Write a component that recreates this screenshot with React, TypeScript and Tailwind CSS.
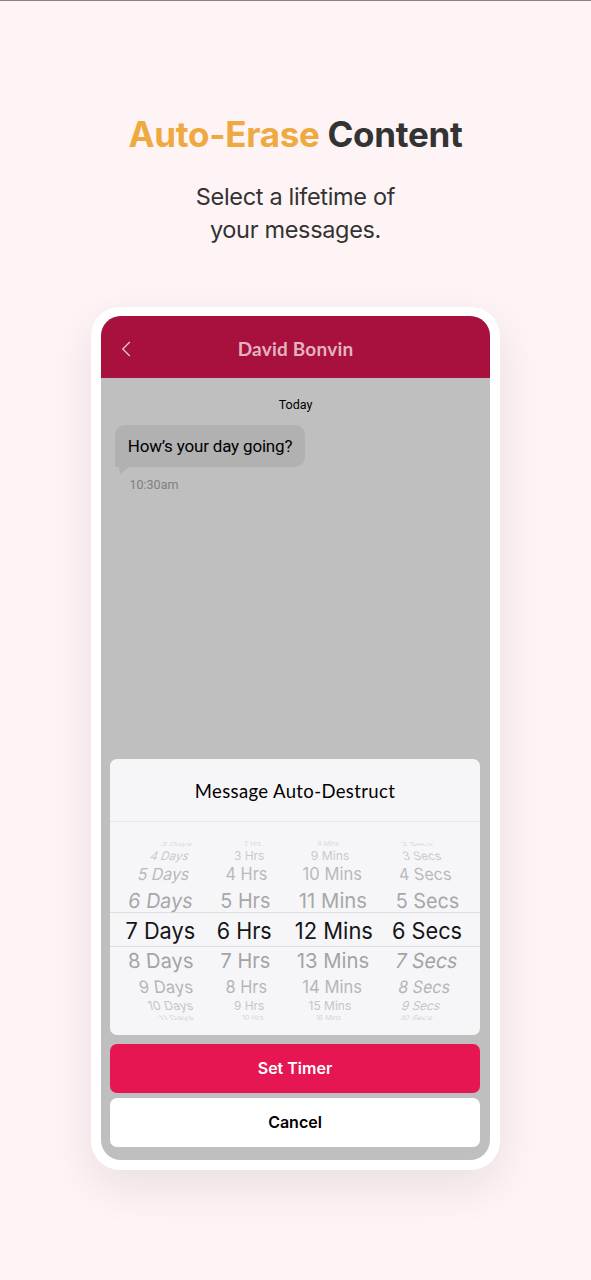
type Cell = { t: string; x: number; w: number; n: number; skew?: number };

const BASE = 22.5;

const rows = [
  { h: 12, dy: 1, sy: 0.25, tone: "text-[#d9d9dc]" },
  { h: 14, dy: 0, sy: 0.52, tone: "text-[#c9c9cc]" },
  { h: 22, dy: 0, sy: 0.74, tone: "text-[#b9b9bc]" },
  { h: 27, dy: 1.5, sy: 0.92, tone: "text-[#a7a7aa]" },
  { h: 35, dy: 0.5, sy: 1, tone: "text-[#151517]" },
  { h: 27, dy: 0, sy: 0.92, tone: "text-[#a3a3a6]" },
  { h: 25, dy: 0, sy: 0.76, tone: "text-[#b5b5b8]" },
  { h: 14, dy: 0, sy: 0.55, tone: "text-[#c5c5c8]" },
  { h: 10, dy: 0, sy: 0.28, tone: "text-[#d5d5d8]" },
];

// x: left edge in the sheet, w: projected width, n: unprojected width
const columns: Cell[][] = [
  [
    { t: "3 Days", x: 51, w: 31, n: 73, skew: -35 },
    { t: "4 Days", x: 40.5, w: 38, n: 73, skew: -20 },
    { t: "5 Days", x: 28, w: 51.5, n: 73, skew: -13 },
    { t: "6 Days", x: 18.5, w: 64, n: 73, skew: -7 },
    { t: "7 Days", x: 15.5, w: 70, n: 72.5 },
    { t: "8 Days", x: 18, w: 65, n: 73, skew: 4 },
    { t: "9 Days", x: 29, w: 53.5, n: 73, skew: 8 },
    { t: "10 Days", x: 38, w: 45.5, n: 84, skew: 14 },
    { t: "11 Days", x: 49, w: 35, n: 80, skew: 35 },
  ],
  [
    { t: "2 Hrs", x: 134, w: 17, n: 57 },
    { t: "3 Hrs", x: 124, w: 30.5, n: 57.5 },
    { t: "4 Hrs", x: 115.5, w: 42, n: 58 },
    { t: "5 Hrs", x: 110.3, w: 51, n: 58 },
    { t: "6 Hrs", x: 106.8, w: 55.5, n: 58 },
    { t: "7 Hrs", x: 110.5, w: 50.5, n: 57 },
    { t: "8 Hrs", x: 115.5, w: 42, n: 58 },
    { t: "9 Hrs", x: 124, w: 30.5, n: 58 },
    { t: "10 Hrs", x: 132, w: 22, n: 68 },
  ],
  [
    { t: "8 Mins", x: 207.5, w: 22, n: 72 },
    { t: "9 Mins", x: 200.8, w: 38.5, n: 71 },
    { t: "10 Mins", x: 192.5, w: 60.5, n: 82 },
    { t: "11 Mins", x: 188.8, w: 69.5, n: 77 },
    { t: "12 Mins", x: 184.8, w: 78.5, n: 80.5 },
    { t: "13 Mins", x: 186.8, w: 73, n: 81 },
    { t: "14 Mins", x: 192.3, w: 60.5, n: 82 },
    { t: "15 Mins", x: 198.5, w: 43.3, n: 81 },
    { t: "16 Mins", x: 206, w: 25.5, n: 82 },
  ],
  [
    { t: "2 Secs", x: 291, w: 31, n: 72, skew: 35 },
    { t: "3 Secs", x: 292.5, w: 38.8, n: 73, skew: 14 },
    { t: "4 Secs", x: 288.8, w: 52.5, n: 73, skew: 7 },
    { t: "5 Secs", x: 285.8, w: 64, n: 73, skew: 2 },
    { t: "6 Secs", x: 282, w: 70.5, n: 73 },
    { t: "7 Secs", x: 285.8, w: 62.5, n: 72, skew: -10 },
    { t: "8 Secs", x: 288.5, w: 52, n: 73, skew: -10 },
    { t: "9 Secs", x: 292, w: 38.5, n: 73, skew: -16 },
    { t: "10 Secs", x: 290, w: 33.5, n: 84, skew: -35 },
  ],
];

function Picker() {
  return (
    <div className="h-[212px] pt-[15px]">
      {rows.map((r, i) => (
        <div
          key={i}
          className={`grid grid-cols-1 items-center ${r.tone} ${i === 4 ? "border-y border-[#dfdfe2]" : ""}`}
          style={{ height: r.h }}
        >
          {columns.map((c, k) => {
            const cell = c[i];
            return (
              <span
                key={k}
                className="col-start-1 row-start-1 w-max origin-left leading-[0px] whitespace-pre"
                style={{
                  fontSize: BASE,
                  transform: `translate(${cell.x}px, ${r.dy}px) skewX(${cell.skew ?? 0}deg) scale(${cell.w / cell.n}, ${r.sy})`,
                }}
              >
                {cell.t}
              </span>
            );
          })}
        </div>
      ))}
    </div>
  );
}

export default function App() {
  return (
    <main className="flex h-[1280px] w-[591px] flex-col items-center overflow-hidden border-t border-[#8b8383] bg-[#fef4f5] font-['Inter',sans-serif] text-[#333333]">
      <h1 className="mt-[111px] text-[35px] leading-[44px] font-bold tracking-[-0.3px] whitespace-nowrap">
        <span className="text-[#eeaa40]">Auto-Erase</span> Content
      </h1>
      <p className="mt-[25px] text-center text-[23.5px] leading-[32.5px] tracking-[-0.33px]">
        Select a lifetime of
        <br />
        your messages.
      </p>
      <section className="mt-[61px] h-[863px] w-[409px] shrink-0 rounded-[29px] bg-white px-[10px] pt-[9px] pb-[10px] shadow-[0_16px_46px_rgba(30,20,25,0.09)]">
        <div className="flex h-[844px] w-[389px] flex-col overflow-hidden rounded-[20px] bg-[#bfbfbf]">
          <header className="grid h-[62px] shrink-0 grid-cols-[50px_1fr_50px] items-center bg-[#a8103d] pt-[4px] text-[#e2b4c1]">
            <svg className="ml-[20px] h-[16px] w-[10px]" viewBox="0 0 10 16" fill="none" stroke="#e8bfca" strokeWidth="1.4">
              <path d="M8.8 1 L1.8 8 L8.8 15" />
            </svg>
            <h2 className="text-center font-['Lato',sans-serif] text-[19px] leading-6 font-bold tracking-[0.2px]">David Bonvin</h2>
          </header>
          <div className="flex flex-1 flex-col font-['Roboto',sans-serif] text-black">
            <p className="mt-[18px] text-center text-[12.5px] leading-[18px]">Today</p>
            <div className="mt-[11px] ml-[14px] flex h-[42px] w-[190px] items-center justify-center rounded-[10px] rounded-bl-none bg-[#b1b1b1] pt-[2px] text-[17px] tracking-[-0.18px] whitespace-nowrap">
              How’s your day going?
            </div>
            <svg className="ml-[18px] h-[8px] w-[10px]" viewBox="0 0 10 8">
              <path d="M0 0H10L1 7.5Z" fill="#b1b1b1" />
            </svg>
            <p className="ml-[28.5px] text-[12.5px] leading-[20px] text-[#808080]">10:30am</p>
          </div>
          <div className="mr-[10px] mb-[13px] ml-[9px] w-[370px] shrink-0">
            <div className="h-[276px] overflow-hidden rounded-[7px] bg-[#f6f6f9]">
              <h3 className="flex h-[63px] items-center justify-center border-b border-[#e6e6e8] pt-[4px] font-['Lato',sans-serif] text-[18.5px] tracking-[0.37px] text-black">
                Message Auto-Destruct
              </h3>
              <Picker />
            </div>
            <button className="mt-[9px] block h-[49px] w-full rounded-[7px] bg-[#e51652] pb-px text-[16px] font-semibold text-white">
              Set Timer
            </button>
            <button className="mt-[5px] block h-[49px] w-full rounded-[7px] bg-white pb-px text-[16px] font-semibold text-black">
              Cancel
            </button>
          </div>
        </div>
      </section>
    </main>
  );
}
